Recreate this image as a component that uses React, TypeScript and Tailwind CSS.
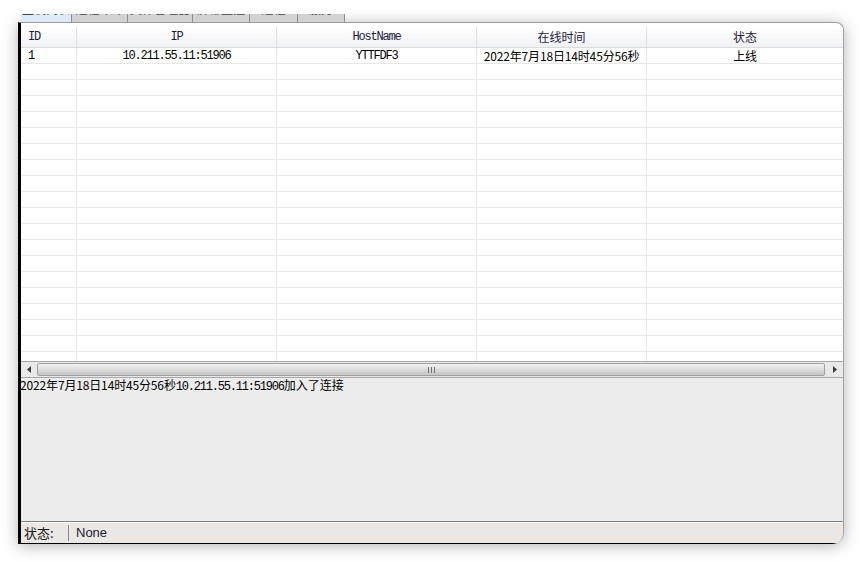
import React from "react";

const mono = "font-['Liberation_Mono',monospace] text-[12px] tracking-[-1.2px]";
const cjk = "font-['Noto_Sans_CJK_SC','Noto_Sans',sans-serif] text-[12px]";

const cols = [
	{ w: "w-[56px]", title: "ID", font: mono, align: "justify-start pl-[7px]" },
	{ w: "w-[200px]", title: "IP", font: mono, align: "justify-center" },
	{ w: "w-[200px]", title: "HostName", font: mono, align: "justify-center" },
	{ w: "w-[170px]", title: "在线时间", font: cjk, align: "justify-center" },
	{ w: "flex-1", title: "状态", font: cjk, align: "justify-center" },
];

const rows = [["1", "10.211.55.11:51906", "YTTFDF3", "2022年7月18日14时45分56秒", "上线"]];

const tabs = [
	{ w: "w-[51px]", label: "主机列表", active: true },
	{ w: "w-[56px]", label: "远程命令" },
	{ w: "w-[65px]", label: "文件管理器" },
	{ w: "w-[57px]", label: "屏幕监控" },
	{ w: "w-[48px]", label: "进程" },
	{ w: "w-[47px]", label: "服务" },
];

const Arrow: React.FC<{ dir: "left" | "right" }> = ({ dir }) => (
	<svg width="5" height="7" viewBox="0 0 5 7">
		<path d={dir === "left" ? "M4 0 L0 3.5 L4 7 Z" : "M1 0 L5 3.5 L1 7 Z"} fill="#3a3a3a" />
	</svg>
);

const App: React.FC = () => {
	const empty = Array.from({ length: 20 });
	return (
		<div className="w-[862px] h-[562px] bg-white overflow-hidden pl-[18px] pt-[14px]">
			<div className="w-[826px] flex flex-col">
				{/* tab strip, only the bottom edge is visible */}
				<div className="relative z-10 flex h-[8px] pl-[3px]">
					{tabs.map((t) => (
						<div
							key={t.label}
							className={`${t.w} h-[8px] overflow-hidden flex items-end justify-center pb-[2px] border-r border-[#8c8c8c] ${cjk} text-[#444] leading-[10px] ${t.active ? "bg-[#dcebf7]" : "bg-[#d2d2d2]"}`}
						>
							<span className="whitespace-nowrap translate-y-[-6px]">{t.label}</span>
						</div>
					))}
				</div>

				{/* main panel */}
				<div className="h-[522px] flex flex-col bg-white border-l-[3px] border-l-black border-t border-t-[#9a9a9a] border-r border-r-[#a3a3a3] rounded-tr-[8px] rounded-br-[12px] shadow-[0_2px_16px_rgba(0,0,0,0.3)] overflow-hidden">
					<div className="h-[4px]" />
					{/* table */}
					<div className="h-[334px] overflow-hidden flex flex-col">
						<div className="h-[21px] flex shrink-0 bg-gradient-to-b from-[#ffffff] to-[#f0f1f4] border-b border-[#dcdcdc] text-[#1c1c40]">
							{cols.map((c, i) => (
								<div key={i} className={`${c.w} flex items-center ${c.align} ${c.font} ${i < 4 ? "border-r border-[#dedede]" : ""}`}>
									{c.title}
								</div>
							))}
						</div>
						{rows.map((r, ri) => (
							<div key={ri} className="h-[16px] flex shrink-0 border-b border-[#e6e6e6] text-black">
								{cols.map((c, i) => (
									<div key={i} className={`${c.w} flex items-center ${c.align} ${i < 3 ? mono : `${cjk} tracking-[-0.15px]`} ${i < 4 ? "border-r border-[#e6e6e6]" : ""}`}>
										{r[i]}
									</div>
								))}
							</div>
						))}
						{empty.map((_, ri) => (
							<div key={ri} className="h-[16px] flex shrink-0 border-b border-[#e8e8e8]">
								{cols.map((c, i) => (
									<div key={i} className={`${c.w} ${i < 4 ? "border-r border-[#e8e8e8]" : ""}`} />
								))}
							</div>
						))}
					</div>

					{/* horizontal scrollbar */}
					<div className="h-[17px] flex items-stretch bg-[#e9e9e9] border-y border-[#a8a8a8]">
						<div className="w-[16px] flex items-center justify-center">
							<Arrow dir="left" />
						</div>
						<div className="flex-1 my-px rounded-[2px] border border-[#a0a0a0] bg-gradient-to-b from-[#f2f2f2] via-[#dcdcdc] to-[#c4c4c4] flex items-center justify-center">
							<div className="flex gap-[2px] h-[6px]">
								<div className="w-px bg-[#6e6e6e]" />
								<div className="w-px bg-[#6e6e6e]" />
								<div className="w-px bg-[#6e6e6e]" />
							</div>
						</div>
						<div className="w-[18px] flex items-center justify-center">
							<Arrow dir="right" />
						</div>
					</div>

					{/* log area */}
					<div className="h-[143px] bg-[#ececec] text-black leading-[12px] -ml-px">
						<span className={`${cjk} tracking-[-0.15px]`}>2022年7月18日14时45分56秒</span>
						<span className={mono}>10.211.55.11:51906</span>
						<span className={cjk}>加入了连接</span>
					</div>

					{/* status bar */}
					<div className="h-[23px] flex flex-col border-t border-[#808080] border-b border-b-black bg-[#ebe7e5]">
						<div className="h-px bg-white" />
						<div className="flex-1 flex items-stretch">
							<div className={`w-[47px] pl-[3px] flex items-center ${cjk} text-[13px] text-[#1a1a1a]`}>状态:</div>
							<div className="w-px my-[2px] bg-[#8a8a8a]" />
							<div className="pl-[7px] flex items-center font-['Liberation_Sans',sans-serif] text-[13px] text-[#1a1a33]">None</div>
						</div>
					</div>
				</div>
			</div>
		</div>
	);
};

export default App;
